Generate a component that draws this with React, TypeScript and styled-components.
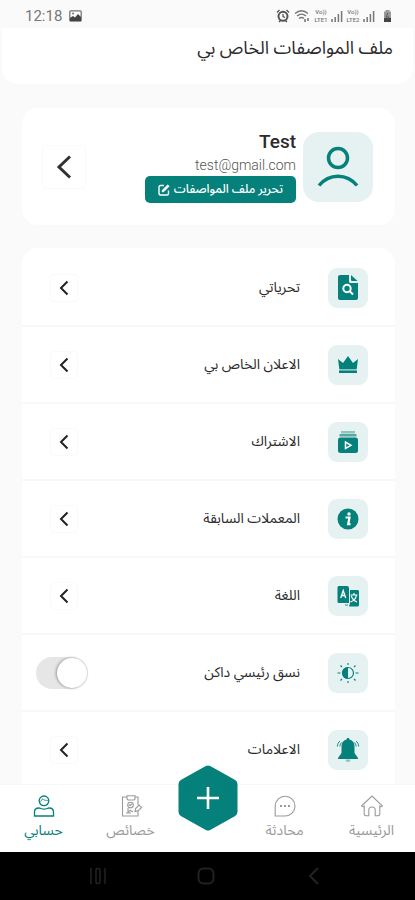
import React, { useState } from "react";
import styled, { createGlobalStyle } from "styled-components";

const teal = "#05807b";
const tint = "#e6f2f1";
const font = `"Roboto", "Noto Sans Arabic", "Noto Naskh Arabic", "DejaVu Sans", sans-serif`;

const GlobalStyle = createGlobalStyle`
  * { box-sizing: border-box; }
  body { margin: 0; background: #fafafa; font-family: ${font}; color: #2b2b2b; }
  button { font: inherit; color: inherit; border: 0; background: none; padding: 0; cursor: pointer; }
  svg { display: block; flex: none; }
`;

const Screen = styled.div`
  height: 100vh;
  display: flex;
  flex-direction: column;
  overflow: hidden;
`;

const StatusBar = styled.div`
  flex: none;
  height: 28px;
  padding: 4px 22px 0 25px;
  display: flex;
  align-items: center;
  justify-content: space-between;
  color: #777;
`;

const StatusGroup = styled.div<{ $gap: number }>`
  display: flex;
  align-items: center;
  gap: ${(p) => p.$gap}px;
`;

const Clock = styled.span`
  font-size: 15px;
  line-height: 16px;
`;

const Volte = styled.span`
  display: flex;
  flex-direction: column;
  align-items: center;
  width: 16px;
  font-size: 6px;
  line-height: 8px;
  font-weight: 500;
`;

const Header = styled.header`
  flex: none;
  height: 56px;
  margin: 0 2px;
  padding: 6px 20px 0;
  background: #fff;
  border-radius: 0 0 16px 16px;
`;

const Title = styled.h1`
  margin: 0;
  font-size: 18px;
  line-height: 28px;
  font-weight: 400;
`;

const Content = styled.main`
  flex: 1;
  min-height: 0;
  overflow-y: auto;
  scrollbar-width: none;
  padding: 24px 20px 0 22px;
  display: flex;
  flex-direction: column;
  gap: 23px;
`;

const ProfileCard = styled.section`
  flex: none;
  display: flex;
  align-items: center;
  gap: 7px;
  padding: 22px 22px 22px 20px;
  background: #fff;
  border-radius: 16px;
`;

const Avatar = styled.div`
  display: grid;
  place-items: center;
  width: 70px;
  height: 70px;
  border-radius: 16px;
  background: ${tint};
`;

const Identity = styled.div`
  flex: 1;
  display: flex;
  flex-direction: column;
  align-items: flex-start;
`;

const Name = styled.strong`
  font-size: 19px;
  line-height: 24px;
  font-weight: 500;
`;

const Email = styled.span`
  font-size: 14px;
  line-height: 22px;
  font-weight: 300;
  color: #555;
`;

const EditButton = styled.button`
  && {
    display: flex;
    align-items: center;
    gap: 4px;
    height: 27px;
    padding: 0 13px;
    border-radius: 5px;
    background: ${teal};
    color: #fff;
    font-size: 12px;
    font-weight: 500;
    white-space: nowrap;
  }
`;

const ChevronButton = styled.button<{ $size: number }>`
  && {
    display: grid;
    place-items: center;
    width: ${(p) => p.$size}px;
    height: ${(p) => p.$size}px;
    border: 1px solid #fafafa;
    border-radius: 4px;
  }
`;

const List = styled.ul`
  flex: none;
  list-style: none;
  margin: 0;
  padding: 2px 0 0;
  background: #fff;
  border-radius: 16px 16px 0 0;
`;

const Row = styled.li<{ $toggle?: boolean }>`
  display: flex;
  align-items: center;
  gap: 28px;
  height: 77px;
  padding-right: 27px;
  padding-left: ${(p) => (p.$toggle ? 14 : 28)}px;
  border-bottom: 2px solid #f8f8f8;
`;

const IconTile = styled.span`
  display: grid;
  place-items: center;
  width: 40px;
  height: 40px;
  border-radius: 9px;
  background: ${tint};
`;

const RowLabel = styled.label`
  flex: 1;
  padding-bottom: 2px;
  font-size: 14px;
  line-height: 24px;
`;

const Switch = styled.input`
  appearance: none;
  margin: 0;
  width: 52px;
  height: 32px;
  padding: 1px;
  border-radius: 16px;
  background: #e6e6e6;
  display: flex;
  cursor: pointer;
  &::before {
    content: "";
    width: 30px;
    height: 30px;
    border-radius: 50%;
    background: #fff;
    box-shadow: -1px 0 3px rgba(0, 0, 0, 0.35);
  }
  &:checked {
    background: ${teal};
    justify-content: flex-end;
  }
`;

const Nav = styled.nav`
  flex: none;
  display: grid;
  grid-template-columns: 87fr 87fr 67fr 87fr 87fr;
  height: 68px;
  background: #fff;
  border-top: 1px solid #f6f8f8;
`;

const NavItem = styled.a<{ $active?: boolean }>`
  display: flex;
  flex-direction: column;
  align-items: center;
  gap: 2px;
  padding-top: 9px;
  color: ${(p) => (p.$active ? teal : "#9a9a9a")};
  font-size: 14px;
  line-height: 20px;
  text-decoration: none;
`;

const AddButton = styled.button`
  justify-self: center;
  align-self: start;
  margin-top: -20px;
`;

const SystemBar = styled.footer`
  flex: none;
  height: 48px;
  background: #000;
  color: #222;
  display: flex;
  justify-content: space-between;
  padding: 0 91px 0 88px;
  direction: ltr;
`;

const SystemButton = styled.button`
  display: grid;
  place-items: center;
  width: 20px;
`;

function Chevron({ large }: { large?: boolean }) {
  return large ? (
    <svg width="16" height="26" viewBox="0 0 16 26" fill="none" stroke="#333" strokeWidth="3">
      <path d="M14 2.500 3 13l11 10.500" />
    </svg>
  ) : (
    <svg width="10" height="16" viewBox="0 0 10 16" fill="none" stroke="#222" strokeWidth="2">
      <path d="M8.500 1.500 2 8l6.500 6.500" />
    </svg>
  );
}

const icons = {
  search: (
    <svg width="24" height="28" viewBox="0 0 24 28" fill={teal}>
      <path d="M4 1h9v6.500c0 .8.700 1.500 1.500 1.500H22v15a2 2 0 0 1-2 2H4a2 2 0 0 1-2-2V3c0-1.100.9-2 2-2z" />
      <path d="M15 1l6.500 6H16a1 1 0 0 1-1-1z" />
      <circle cx="11" cy="14.500" r="3.700" fill="none" stroke="#fff" strokeWidth="2" />
      <path d="M13.800 17.300 17 20.500" stroke="#fff" strokeWidth="2" />
    </svg>
  ),
  crown: (
    <svg width="22" height="18" viewBox="0 0 22 18" fill={teal}>
      <path d="M1 3l5 4L11 0l5 7 5-4-1.300 10H2.300z" />
      <path d="M2 14.500h18V17H2z" />
      <path d="M2.500 13h17v1.500h-17z" opacity=".4" />
    </svg>
  ),
  subscription: (
    <svg width="22" height="24" viewBox="0 0 22 24" fill={teal}>
      <path d="M4 1h14v2.500H4z" opacity=".4" />
      <path d="M2.500 4h17v2.500h-17z" opacity=".65" />
      <rect x="1" y="7.500" width="20" height="15.500" rx="2.500" />
      <path d="M8.500 12v6.500l5.500-3.200z" fill="none" stroke="#fff" strokeWidth="1.500" />
    </svg>
  ),
  info: (
    <svg width="22" height="22" viewBox="0 0 22 22">
      <circle cx="11" cy="11" r="10.500" fill={teal} />
      <circle cx="12" cy="6" r="1.700" fill="#fff" />
      <path d="M8.500 9.500h4l-1.300 6.700h2.300" fill="none" stroke="#fff" strokeWidth="2.200" />
    </svg>
  ),
  language: (
    <svg width="22" height="22" viewBox="0 0 22 22" fill={teal}>
      <path d="M2 1h8a2 2 0 0 1 2 2v15H2a1.500 1.500 0 0 1-1.500-1.500v-14C.5 1.700 1.200 1 2 1z" />
      <path d="M13 5h7.500c.8 0 1.500.7 1.500 1.500V20c0 .8-.7 1.500-1.500 1.500H12L13 18z" />
      <path d="M3.700 13 6.200 5.500 8.700 13M4.700 10.500h3" fill="none" stroke="#fff" strokeWidth="1.300" />
      <path d="M13.500 10h7M17 8v2m2.500 0c-.5 3-3 6-6 7m.8-6c1 3 3 5 5.700 6" fill="none" stroke="#fff" strokeWidth="1.200" />
      <path d="M8 19.500c1 1 2 1 3 0" fill="none" stroke={teal} strokeWidth="1" />
    </svg>
  ),
  theme: (
    <svg width="22" height="22" viewBox="0 0 22 22" fill="none" stroke={teal}>
      <circle cx="11" cy="11" r="5.500" strokeWidth="1.200" />
      <path d="M11 5a6 6 0 0 0 0 12z" fill={teal} stroke="none" />
      <path d="M11 1v2M11 19v2M.5 11h3M18.500 11h3M3.500 3.500 5 5M17 17l1.500 1.500M3.500 18.500 5 17M17 5l1.500-1.500" strokeWidth="1.100" />
    </svg>
  ),
  bell: (
    <svg width="24" height="26" viewBox="0 0 24 26" fill={teal}>
      <path d="M12 1c.9 0 1.500.7 1.500 1.600C17 3.500 18.500 6 18.500 9.500v6.500L22 21v1H2v-1l3.500-5V9.500C5.500 6 7 3.500 10.500 2.600 10.500 1.700 11.100 1 12 1z" />
      <path d="M9.500 22.500a2.500 2.500 0 0 0 5 0z" opacity=".4" />
      <path d="M4 4C2.500 5.200 1.500 7 1.300 9.500M20 4c1.500 1.200 2.500 3 2.700 5.500M5.500 5.500C4.500 6.500 4 8 3.800 9.500M18.500 5.500c1 1 1.500 2.500 1.700 4" fill="none" stroke={teal} strokeWidth=".9" />
    </svg>
  ),
};

const rows: { id: keyof typeof icons; label: string; toggle?: boolean }[] = [
  { id: "search", label: "تحرياتي" },
  { id: "crown", label: "الاعلان الخاص بي" },
  { id: "subscription", label: "الاشتراك" },
  { id: "info", label: "المعملات السابقة" },
  { id: "language", label: "اللغة" },
  { id: "theme", label: "نسق رئيسي داكن", toggle: true },
  { id: "bell", label: "الاعلامات" },
];

const line = { width: 24, height: 24, viewBox: "0 0 24 24", fill: "none", stroke: "currentColor", strokeWidth: 1.1 };

const HomeIcon = () => (
  <svg {...line}>
    <path d="M1.500 12 12 2l10.500 10c-.8 1-1.800 1-2.700.2V20c0 1-.6 1.700-1.600 1.700h-3V16c0-2-1.200-3-3.200-3s-3.200 1-3.200 3v5.700h-3c-1 0-1.600-.7-1.600-1.700v-7.800c-.9.8-1.900.8-2.700-.2z" />
  </svg>
);

const ChatIcon = () => (
  <svg {...line}>
    <path d="M2.200 22V12A9.900 9.900 0 1 1 12 22z" />
    <path d="M7 12h2M11 12h2M15 12h2" strokeWidth="2" />
  </svg>
);

const ClipboardIcon = () => (
  <svg {...line}>
    <path d="M8 3H3.500v19H19v-5M16 3h3v8" />
    <path d="M8 1.800h8V5l-1 1H9L8 5z" />
    <circle cx="11.500" cy="11" r="2.800" />
    <path d="M10 10.500l1.200 1.200 1.800-2M9 14v4l2.500-1.500L14 18M7 19h5" />
    <path d="M16 17.500l.6-3 3.500-3.500 2.400 2.400-3.500 3.500z" />
  </svg>
);

const AccountIcon = () => (
  <svg {...line} strokeWidth={1.3}>
    <circle cx="12" cy="6.800" r="4.800" />
    <path d="M7.500 7.500c1.500 0 2.500-1 2.700-2.800 1.300 1.300 3.500 2 6.300 1.600" strokeWidth=".8" />
    <path d="M2.500 22v-4c0-2.500 2-4 4.500-4 1.500 0 2.500 1.200 5 1.200s3.500-1.200 5-1.200c2.500 0 4.500 1.500 4.500 4v4z" />
  </svg>
);

const Signal = () => (
  <svg width="12" height="12" viewBox="0 0 12 12" stroke="#777" strokeWidth="1.500">
    <path d="M1 12V9M4.200 12V7M7.400 12V4M10.600 12V1" />
  </svg>
);

const VolteMark = ({ sim }: { sim: number }) => (
  <Volte>
    <span>Vo))</span>
    <span>LTE{sim}</span>
  </Volte>
);

export default function App() {
  const [dark, setDark] = useState(false);

  return (
    <Screen dir="rtl" lang="ar">
      <GlobalStyle />
      <StatusBar dir="ltr">
        <StatusGroup $gap={7}>
          <Clock>12:18</Clock>
          <svg width="13" height="12" viewBox="0 0 13 12">
            <rect x=".8" y=".8" width="11.400" height="10.400" rx="1" fill="none" stroke="#777" strokeWidth="1.300" />
            <path d="M1 11V8l3-2 2 1.500L9 4l3 3v4z" fill="#444" />
            <circle cx="4" cy="3.500" r="1" fill="#777" />
          </svg>
        </StatusGroup>
        <StatusGroup $gap={2}>
          <svg width="14" height="14" viewBox="0 0 14 14" fill="none" stroke="#555">
            <circle cx="7" cy="7.300" r="4.500" strokeWidth="2" />
            <path d="M7 5v2.500l2 1M1 3.500 3.500 1M13 3.500 10.500 1M3 13l1.500-1.500M11 13l-1.500-1.500" strokeWidth="1.300" />
          </svg>
          <svg width="19" height="14" viewBox="0 0 19 14" fill="none" stroke="#777" strokeWidth="1.400">
            <path d="M3 4.500c4-3.500 9-3.500 13 0M5 7c3-2.500 6-2.500 9 0M7 9.500c1.500-1.200 3.500-1.200 5 0" />
            <path d="M13 13v-3M16 9v3" strokeWidth="1.600" />
          </svg>
          <VolteMark sim={1} />
          <Signal />
          <VolteMark sim={2} />
          <Signal />
          <svg width="16" height="14" viewBox="0 0 16 14">
            <path d="M8.500 1h4v1.500H14V13H7V2.500h1.500z" fill="#999" />
            <path d="M7 9h7v4H7z" fill="#444" />
            <path d="M11 4 9 8h3l-1.500 3" fill="none" stroke="#555" />
          </svg>
        </StatusGroup>
      </StatusBar>

      <Header>
        <Title>ملف المواصفات الخاص بي</Title>
      </Header>

      <Content>
        <ProfileCard>
          <Avatar>
            <svg width="42" height="42" viewBox="0 0 42 42" fill="none" stroke={teal} strokeWidth="3.500">
              <circle cx="21" cy="12" r="9.500" />
              <path d="M2 39.500c10-12.500 28-12.500 38 0" />
            </svg>
          </Avatar>
          <Identity>
            <Name>Test</Name>
            <Email>test@gmail.com</Email>
            <EditButton>
              تحرير ملف المواصفات
              <svg width="12" height="12" viewBox="0 0 12 12" fill="none" stroke="#fff" strokeWidth="1.400">
                <path d="M6 1.500H2.500a1.500 1.500 0 0 0-1.500 1.500v6.500A1.500 1.500 0 0 0 2.500 11H9a1.500 1.500 0 0 0 1.500-1.500V6.500" />
                <path d="M4 8l.4-2L9.800.8l1.400 1.400L6 7.600z" fill="#fff" strokeWidth=".6" />
              </svg>
            </EditButton>
          </Identity>
          <ChevronButton $size={44} aria-label="فتح الملف">
            <Chevron large />
          </ChevronButton>
        </ProfileCard>

        <List>
          {rows.map((row) => (
            <Row key={row.id} $toggle={row.toggle}>
              <IconTile>{icons[row.id]}</IconTile>
              <RowLabel htmlFor={row.id}>{row.label}</RowLabel>
              {row.toggle ? (
                <Switch id={row.id} type="checkbox" role="switch" checked={dark} onChange={(e) => setDark(e.target.checked)} />
              ) : (
                <ChevronButton $size={28} id={row.id}>
                  <Chevron />
                </ChevronButton>
              )}
            </Row>
          ))}
        </List>
      </Content>

      <Nav>
        <NavItem href="#home">
          <HomeIcon />
          الرئيسية
        </NavItem>
        <NavItem href="#chat">
          <ChatIcon />
          محادثة
        </NavItem>
        <AddButton aria-label="إضافة">
          <svg width="60" height="66" viewBox="0 0 60 66">
            <path d="M30 5 55 19v28L30 61 5 47V19z" fill={teal} stroke={teal} strokeWidth="9" strokeLinejoin="round" />
            <path d="M30 22v22M19 33h22" stroke="#fff" strokeWidth="2.600" />
          </svg>
        </AddButton>
        <NavItem href="#properties">
          <ClipboardIcon />
          خصائص
        </NavItem>
        <NavItem href="#account" $active aria-current="page">
          <AccountIcon />
          حسابي
        </NavItem>
      </Nav>

      <SystemBar>
        <SystemButton aria-label="التطبيقات الأخيرة">
          <svg width="18" height="18" viewBox="0 0 18 18" fill="none" stroke="currentColor" strokeWidth="1.500">
            <path d="M2 1v16M16 1v16" />
            <rect x="7" y="1.500" width="4" height="15" rx="1.500" />
          </svg>
        </SystemButton>
        <SystemButton aria-label="الشاشة الرئيسية">
          <svg width="18" height="18" viewBox="0 0 18 18" fill="none" stroke="currentColor" strokeWidth="2">
            <rect x="1.500" y="1.500" width="15" height="15" rx="5" />
          </svg>
        </SystemButton>
        <SystemButton aria-label="رجوع">
          <svg width="12" height="18" viewBox="0 0 12 18" fill="none" stroke="currentColor" strokeWidth="2">
            <path d="M10 1 2 9l8 8" />
          </svg>
        </SystemButton>
      </SystemBar>
    </Screen>
  );
}
